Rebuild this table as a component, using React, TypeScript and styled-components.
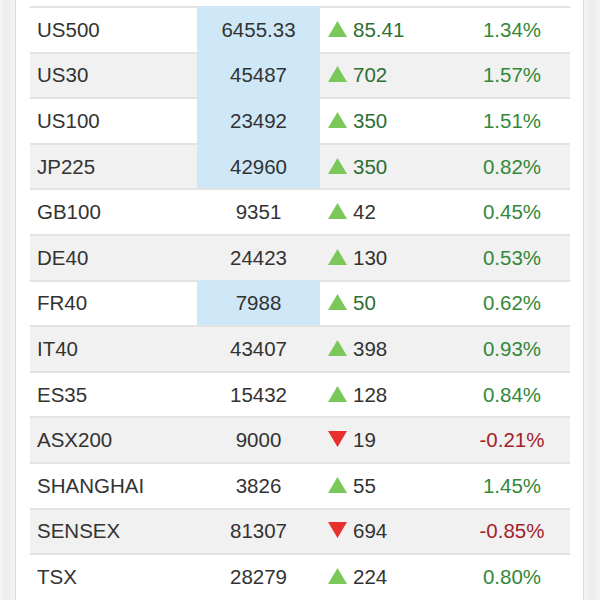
import * as React from 'react'
import styled, { createGlobalStyle } from 'styled-components'

const GlobalStyle = createGlobalStyle`
    html, body {
        margin: 0;
        padding: 0;
        background: #ffffff;
        overflow: hidden;
    }
    body {
        font-family: "Liberation Sans", Arial, Helvetica, sans-serif;
    }
`

type Quote = {
    name: string
    price: string
    change: string
    pct: string
    up: boolean
    fresh?: boolean
}

const quotes: Quote[] = [
    { name: 'US500', price: '6455.33', change: '85.41', pct: '1.34%', up: true, fresh: true },
    { name: 'US30', price: '45487', change: '702', pct: '1.57%', up: true, fresh: true },
    { name: 'US100', price: '23492', change: '350', pct: '1.51%', up: true, fresh: true },
    { name: 'JP225', price: '42960', change: '350', pct: '0.82%', up: true, fresh: true },
    { name: 'GB100', price: '9351', change: '42', pct: '0.45%', up: true },
    { name: 'DE40', price: '24423', change: '130', pct: '0.53%', up: true },
    { name: 'FR40', price: '7988', change: '50', pct: '0.62%', up: true, fresh: true },
    { name: 'IT40', price: '43407', change: '398', pct: '0.93%', up: true },
    { name: 'ES35', price: '15432', change: '128', pct: '0.84%', up: true },
    { name: 'ASX200', price: '9000', change: '19', pct: '-0.21%', up: false },
    { name: 'SHANGHAI', price: '3826', change: '55', pct: '1.45%', up: true },
    { name: 'SENSEX', price: '81307', change: '694', pct: '-0.85%', up: false },
    { name: 'TSX', price: '28279', change: '224', pct: '0.80%', up: true },
]

const Page = styled.div`
    display: flex;
    width: 600px;
    height: 600px;
`

const Rail = styled.div<{ $side: 'left' | 'right' }>`
    flex: 0 0 ${p => (p.$side === 'left' ? '15px' : '16px')};
    background: linear-gradient(to right, #f6f6f6, #ececec 40%, #f4f4f4);
    ${p => (p.$side === 'left' ? 'border-right: 1px solid #d9d9d9;' : 'border-left: 1px solid #dedede;')}
`

const Main = styled.div`
    flex: 1;
    padding: 6px 13px 0 14px;
    overflow: hidden;
`

const Table = styled.div`
    display: flex;
    flex-direction: column;
`

const Row = styled.div<{ $odd: boolean }>`
    display: grid;
    grid-template-columns: 167px 123px 134px 1fr;
    height: 45.6px;
    background: ${p => (p.$odd ? '#f1f1f1' : '#ffffff')};
    font-size: 20.5px;
    color: #333333;
`

const Cell = styled.div`
    display: flex;
    align-items: center;
    border-top: 2px solid #e3e3e3;
`

const NameCell = styled(Cell)`
    padding-left: 7px;
`

const PriceCell = styled(Cell)<{ $fresh?: boolean }>`
    justify-content: center;
    background: ${p => (p.$fresh ? '#cfe8f7' : 'transparent')};
    border-top-color: ${p => (p.$fresh ? '#cfe8f7' : '#e3e3e3')};
`

const ChangeCell = styled(Cell)<{ $fresh?: boolean }>`
    padding-left: 8px;
    gap: 6px;
    color: ${p => (p.$fresh ? '#2e6f33' : '#333333')};
`

const PctCell = styled(Cell)<{ $up: boolean }>`
    justify-content: center;
    color: ${p => (p.$up ? '#33883a' : '#a31e2a')};
`

const Arrow = styled.svg`
    width: 19px;
    height: 16px;
    flex: 0 0 auto;
    margin-top: -2px;
`

const Triangle = ({ up }: { up: boolean }) => (
    <Arrow viewBox="0 0 19 16">
        {up
            ? <polygon points="9.5,0 19,16 0,16" fill="#7ac85a" />
            : <polygon points="0,0 19,0 9.5,16" fill="#e8302c" />}
    </Arrow>
)

export default function App() {
    return (
        <>
            <GlobalStyle />
            <Page>
                <Rail $side="left" />
                <Main>
                    <Table>
                        {quotes.map((q, i) => (
                            <Row key={q.name} $odd={i % 2 === 1}>
                                <NameCell>{q.name}</NameCell>
                                <PriceCell $fresh={q.fresh}>{q.price}</PriceCell>
                                <ChangeCell $fresh={q.fresh}>
                                    <Triangle up={q.up} />
                                    {q.change}
                                </ChangeCell>
                                <PctCell $up={q.up}>{q.pct}</PctCell>
                            </Row>
                        ))}
                    </Table>
                </Main>
                <Rail $side="right" />
            </Page>
        </>
    )
}
